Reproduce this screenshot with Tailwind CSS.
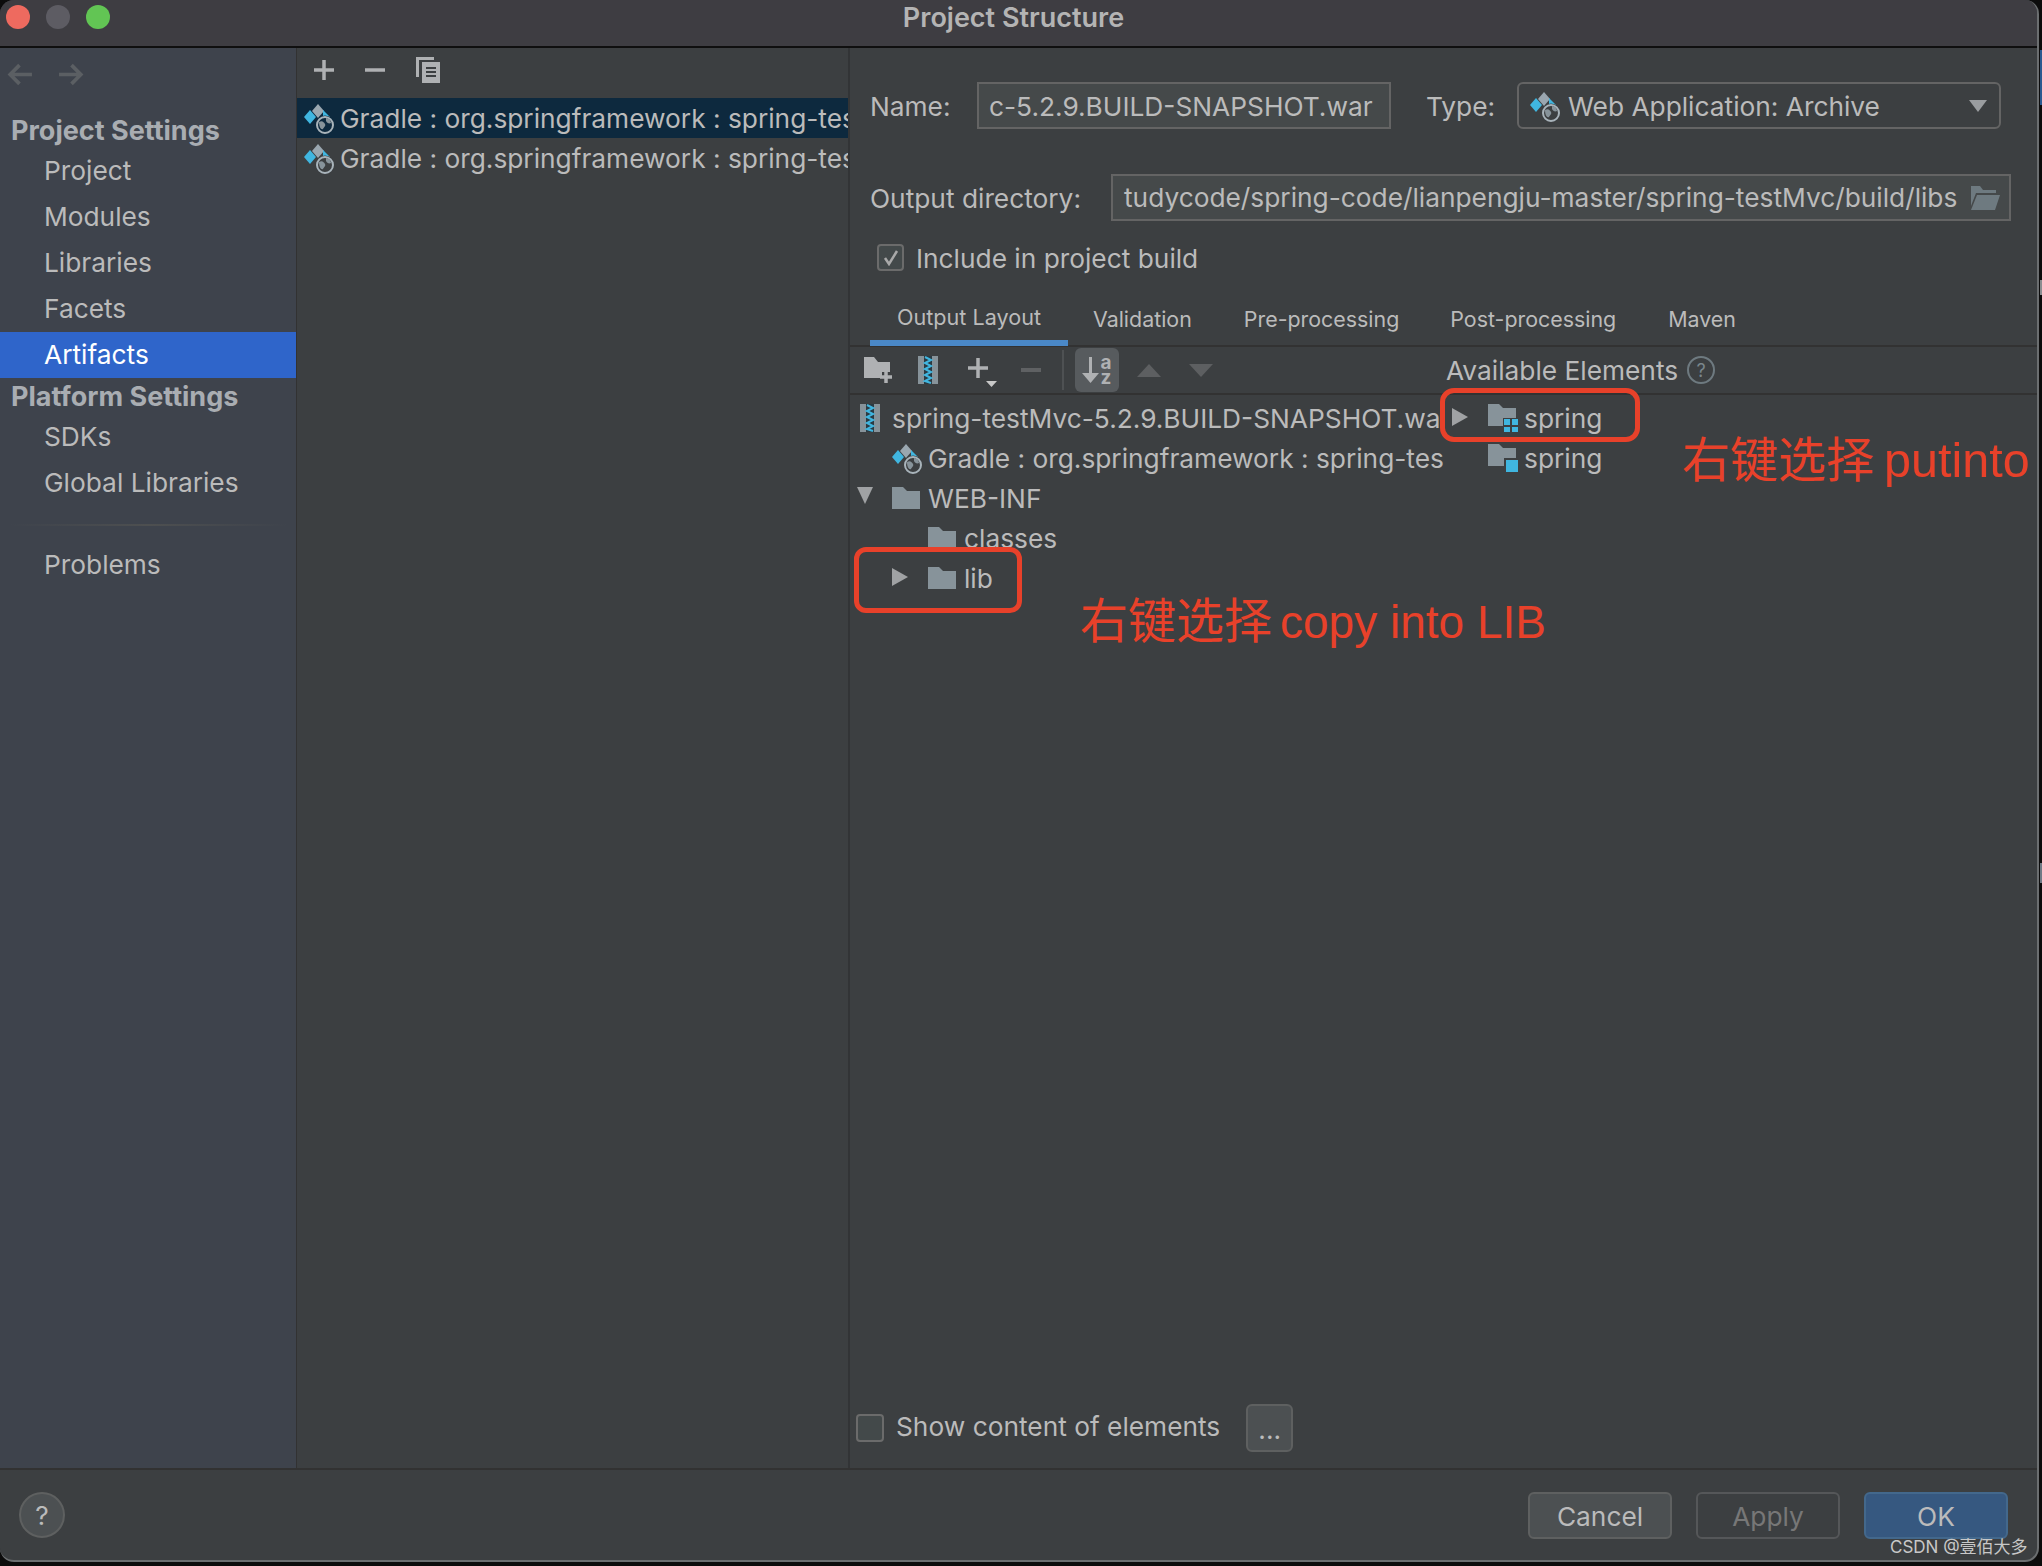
<!DOCTYPE html>
<html lang="zh-CN">
<head>
  <meta charset="UTF-8">
  <title>Project Structure</title>
  <script src="https://cdn.jsdelivr.net/npm/@tailwindcss/browser@4"></script>
</head>
<body class="bg-[#0c0c0c] w-[2042px] h-[1566px] overflow-hidden relative font-['Inter','Noto_Sans_CJK_SC',sans-serif] text-[26.3px] text-[#bbbbbb]">

  <!-- icons used more than once -->
  <svg class="hidden">
    <symbol id="web" viewBox="0 0 30 34">
      <path d="M14 3l6 7-6 7-6-7z" fill="#9aa7b0"/>
      <path d="M6 9l6 7-6 7-6-7z" fill="#40b6e0"/>
      <path d="M19 9l7 7h-7z" fill="#40b6e0"/>
      <circle cx="21" cy="24" r="9.500" fill="currentColor"/>
      <circle cx="21" cy="24" r="8" fill="none" stroke="#a8b3ba" stroke-width="2"/>
      <path d="M15 21c3-2 5 0 6 2s-1 3-2 5c-2 1-4-2-4-7zm7-4c3 0 5 3 5 5-2 1-4 0-5-2z" fill="#87939a"/>
    </symbol>
    <symbol id="folder" viewBox="0 0 28 22">
      <path d="M0 0h11l4 4h13v18H0z" fill="#87939a"/>
    </symbol>
    <symbol id="zip" viewBox="0 0 20 28">
      <rect width="20" height="28" fill="#87939a"/>
      <rect x="6" width="8" height="28" fill="#2b3a42"/>
      <path d="M7 1l6 3-6 3 6 3-6 3 6 3-6 3 6 3-6 3 6 2" fill="none" stroke="#40b6e0" stroke-width="2"/>
    </symbol>
  </svg>

  <!-- window -->
  <div class="w-[2039px] h-[1562px] flex flex-col bg-[#3c3f41] border-r-2 border-b-2 border-[#6b6e70] rounded-t-[14px] rounded-b-[14px] overflow-hidden">

    <!-- title bar -->
    <div class="h-[48px] shrink-0 bg-[#3e3d42] border-b-2 border-[#0f0f0f] flex items-center relative pb-[12px]">
      <div class="flex gap-[16px] pl-[6px]">
        <span class="w-[24px] h-[24px] rounded-full bg-[#ee6a5f]"></span>
        <span class="w-[24px] h-[24px] rounded-full bg-[#5d5c63]"></span>
        <span class="w-[24px] h-[24px] rounded-full bg-[#62c554]"></span>
      </div>
      <div class="flex-1 text-center font-semibold text-[#b4b4b4] text-[27px] pr-[120px] pt-[2px]">Project Structure</div>
    </div>

    <!-- body -->
    <div class="flex-1 flex min-h-0">

      <!-- sidebar -->
      <div class="w-[297px] shrink-0 bg-[#3e434c] border-r border-[#323232] flex flex-col">
        <div class="h-[62px] flex items-start pt-[14px] pl-[6px] gap-[25px]">
          <svg class="w-[27px] h-[25px]" viewBox="0 0 26 24"><path d="M25 12H4M13 3l-9 9 9 9" fill="none" stroke="#5b5f63" stroke-width="3.5"/></svg>
          <svg class="w-[27px] h-[25px]" viewBox="0 0 26 24"><path d="M1 12h21M13 3l9 9-9 9" fill="none" stroke="#5b5f63" stroke-width="3.5"/></svg>
        </div>
        <div class="h-[38px] pl-[11px] pt-[4px] flex items-center font-bold text-[27px] text-[#a9adb2]">Project Settings</div>
        <div class="h-[46px] pl-[44px] flex items-center">Project</div>
        <div class="h-[46px] pl-[44px] flex items-center">Modules</div>
        <div class="h-[46px] pl-[44px] flex items-center">Libraries</div>
        <div class="h-[46px] pl-[44px] flex items-center">Facets</div>
        <div class="h-[46px] pl-[44px] flex items-center bg-[#2f65ca] text-white">Artifacts</div>
        <div class="h-[36px] pl-[11px] pt-[2px] flex items-center font-bold text-[27px] text-[#a9adb2]">Platform Settings</div>
        <div class="h-[46px] pl-[44px] flex items-center">SDKs</div>
        <div class="h-[46px] pl-[44px] flex items-center">Global Libraries</div>
        <div class="h-[2px] mt-[18px] mb-[16px] mx-[8px] bg-gradient-to-r from-[#3e434c] via-[#4d4f50] to-[#3e434c]"></div>
        <div class="h-[46px] pl-[44px] flex items-center">Problems</div>
      </div>

      <!-- artifact list -->
      <div class="w-[553px] shrink-0 border-r-2 border-[#323436] flex flex-col">
        <div class="h-[44px] shrink-0 border-b-2 border-[#323232] flex items-center pl-[17px] pb-[6px] gap-[31px] box-content">
          <svg class="w-[20px] h-[20px]" viewBox="0 0 20 20"><path d="M10 0v20M0 10h20" stroke="#afb1b3" stroke-width="3.5"/></svg>
          <svg class="w-[20px] h-[20px]" viewBox="0 0 20 20"><path d="M0 10h20" stroke="#afb1b3" stroke-width="3.5"/></svg>
          <svg class="w-[24px] h-[26px]" viewBox="0 0 24 26"><path d="M0 0h18v3H3v17H0z" fill="#afb1b3"/><path d="M6 5h18v21H6z" fill="#afb1b3"/><path d="M10 11h10M10 15h10M10 19h10" stroke="#3c3f41" stroke-width="2"/></svg>
        </div>
        <div class="h-[40px] -mt-[2px] bg-[#0d293e] flex items-center pl-[7px] gap-[6px] overflow-hidden whitespace-nowrap">
          <svg class="w-[30px] h-[34px] shrink-0 text-[#0d293e]"><use href="#web"/></svg><span class="pt-[2px]">Gradle : org.springframework : spring-test</span>
        </div>
        <div class="h-[40px] flex items-center pl-[7px] gap-[6px] overflow-hidden whitespace-nowrap">
          <svg class="w-[30px] h-[34px] shrink-0 text-[#3c3f41]"><use href="#web"/></svg><span class="pt-[2px]">Gradle : org.springframework : spring-test</span>
        </div>
      </div>

      <!-- artifact details -->
      <div class="flex-1 min-w-0 flex flex-col">
        <div class="pl-[20px] pt-[34px] flex flex-col">
          <div class="flex items-center h-[47px]">
            <span class="w-[107px] pt-[2px]">Name:</span>
            <div class="w-[414px] h-[47px] bg-[#45494a] border-2 border-[#646464] flex items-center pl-[10px] pt-[3px] whitespace-nowrap overflow-hidden">c-5.2.9.BUILD-SNAPSHOT.war</div>
            <span class="ml-[35px] w-[91px] pt-[2px]">Type:</span>
            <div class="w-[484px] h-[47px] border-2 border-[#646464] rounded-[6px] flex items-center pl-[11px] gap-[8px] text-[#bbbbbb]">
              <svg class="w-[30px] h-[34px] shrink-0 text-[#3c3f41]"><use href="#web"/></svg>
              <span class="flex-1 pt-[3px]">Web Application: Archive</span>
              <svg class="w-[18px] h-[12px] mr-[12px]" viewBox="0 0 18 12"><path d="M0 0h18l-9 12z" fill="#9a9da0"/></svg>
            </div>
          </div>
          <div class="flex items-center h-[47px] mt-[45px]">
            <span class="w-[241px] pt-[2px]">Output directory:</span>
            <div class="w-[900px] h-[47px] bg-[#45494a] border-2 border-[#646464] flex items-center pl-[11px] whitespace-nowrap overflow-hidden">
              <span class="flex-1 pt-[1px]">tudycode/spring-code/lianpengju-master/spring-testMvc/build/libs</span>
              <svg class="w-[30px] h-[24px] mr-[9px] shrink-0" viewBox="0 0 30 24"><path d="M1 0h9l3 4h13v3H6L1 20z" fill="#6e7a80"/><path d="M7 9h23l-5 15H1z" fill="#6e7a80"/></svg>
            </div>
          </div>
          <div class="flex items-center h-[27px] mt-[23px] pl-[7px] gap-[12px]">
            <div class="w-[27px] h-[27px] bg-[#43494a] border-2 border-[#6b6b6b] rounded-[4px] flex items-center justify-center">
              <svg class="w-[16px] h-[16px]" viewBox="0 0 16 16"><path d="M2 8l4 6 8-13" fill="none" stroke="#a9a9a9" stroke-width="2.5"/></svg>
            </div>
            <span class="pt-[2px]">Include in project build</span>
          </div>
        </div>

        <!-- tabs -->
        <div class="h-[76px] shrink-0 border-b-2 border-[#323232] pl-[20px] flex items-end text-[21.4px]">
          <div class="w-[198px] h-[53px] flex items-center justify-center border-b-[6px] border-[#4a88c7] -mb-[1px] pt-[2px] text-[21.6px]">Output Layout</div>
          <div class="h-[53px] pl-[25px] flex items-center pt-[1px]">Validation</div>
          <div class="h-[53px] pl-[52px] flex items-center pt-[1px]">Pre-processing</div>
          <div class="h-[53px] pl-[51px] flex items-center pt-[1px]">Post-processing</div>
          <div class="h-[53px] pl-[52px] flex items-center pt-[1px]">Maven</div>
        </div>

        <!-- output layout toolbar -->
        <div class="h-[48px] shrink-0 border-b-2 border-[#323232] flex items-center">
          <div class="w-[594px] flex items-center pl-[14px]">
            <svg class="w-[28px] h-[26px]" viewBox="0 0 28 26"><path d="M0 0h10l4 5h12v10H18v6H0z" fill="#afb1b3"/><path d="M22 14v12M16 20h12" stroke="#afb1b3" stroke-width="3.5"/></svg>
            <svg class="w-[20px] h-[28px] ml-[26px]"><use href="#zip"/></svg>
            <svg class="w-[30px] h-[30px] ml-[30px] mt-[5px]" viewBox="0 0 30 30"><path d="M10 0v20M0 10h20" stroke="#afb1b3" stroke-width="3.5"/><path d="M18 23h11l-5.500 6z" fill="#c8c8c8"/></svg>
            <svg class="w-[20px] h-[4px] ml-[23px]"><rect width="20" height="4" fill="#5f6163"/></svg>
            <div class="w-[2px] h-[40px] bg-[#4e5153] ml-[21px]"></div>
            <div class="w-[44px] h-[44px] ml-[11px] bg-[#575b5e] rounded-[6px] flex items-center justify-center gap-[1px]">
              <svg class="w-[17px] h-[26px]" viewBox="0 0 17 26"><path d="M8.500 0v22" stroke="#afb1b3" stroke-width="3"/><path d="M0 16h17l-8.500 10z" fill="#afb1b3"/></svg>
              <div class="flex flex-col text-[19px] leading-[15px] font-bold text-[#afb1b3]"><span>a</span><span>z</span></div>
            </div>
            <svg class="w-[24px] h-[13px] ml-[18px]" viewBox="0 0 24 13"><path d="M12 0l12 13H0z" fill="#5d5f61"/></svg>
            <svg class="w-[24px] h-[13px] ml-[28px]" viewBox="0 0 24 13"><path d="M0 0h24L12 13z" fill="#5d5f61"/></svg>
          </div>
          <div class="flex items-center pl-[2px] gap-[9px]">
            <span class="pt-[2px]">Available Elements</span>
            <div class="w-[28px] h-[28px] rounded-full border-2 border-[#6e7a80] flex items-center justify-center text-[18px] text-[#7a868c]">?</div>
          </div>
        </div>

        <!-- trees -->
        <div class="flex-1 flex min-h-0 pt-[3px]">
          <div class="w-[594px] whitespace-nowrap overflow-hidden">
            <div class="h-[40px] flex items-center pl-[10px] gap-[12px]">
              <svg class="w-[20px] h-[28px] shrink-0"><use href="#zip"/></svg><span class="pt-[2px]">spring-testMvc-5.2.9.BUILD-SNAPSHOT.war</span>
            </div>
            <div class="h-[40px] flex items-center pl-[42px] gap-[6px]">
              <svg class="w-[30px] h-[34px] shrink-0 text-[#3c3f41]"><use href="#web"/></svg><span class="pt-[2px]">Gradle : org.springframework : spring-tes</span>
            </div>
            <div class="h-[40px] flex items-center pl-[7px]">
              <svg class="w-[16px] h-[17px] -mt-[6px]" viewBox="0 0 16 17"><path d="M0 0h16L8 17z" fill="#a0a2a4"/></svg>
              <svg class="w-[28px] h-[22px] ml-[19px]"><use href="#folder"/></svg><span class="ml-[8px] pt-[2px]">WEB-INF</span>
            </div>
            <div class="h-[40px] flex items-center pl-[78px]">
              <svg class="w-[28px] h-[22px]"><use href="#folder"/></svg><span class="ml-[8px] pt-[2px]">classes</span>
            </div>
            <div class="h-[40px] flex items-center pl-[42px]">
              <svg class="w-[16px] h-[18px] -mt-[2px]" viewBox="0 0 16 18"><path d="M0 0l16 9L0 18z" fill="#a0a2a4"/></svg>
              <svg class="w-[28px] h-[22px] ml-[20px]"><use href="#folder"/></svg><span class="ml-[8px] pt-[2px]">lib</span>
            </div>
          </div>
          <div class="flex-1">
            <div class="h-[40px] flex items-center pl-[8px]">
              <svg class="w-[16px] h-[18px] -mt-[2px]" viewBox="0 0 16 18"><path d="M0 0l16 9L0 18z" fill="#a0a2a4"/></svg>
              <svg class="w-[30px] h-[28px] ml-[20px]" viewBox="0 0 30 28"><path d="M0 0h11l4 4h13v18H0z" fill="#87939a"/><rect x="15" y="14" width="15" height="14" fill="#3c3f41"/><path d="M16 15h6v6h-6zM24 15h6v6h-6zM16 23h6v5h-6zM24 23h6v5h-6z" fill="#40b6e0"/></svg>
              <span class="ml-[6px] pt-[2px]">spring</span>
            </div>
            <div class="h-[40px] flex items-center pl-[44px]">
              <svg class="w-[30px] h-[28px]" viewBox="0 0 30 28"><path d="M0 0h11l4 4h13v18H0z" fill="#87939a"/><rect x="16" y="14" width="14" height="14" fill="#3c3f41"/><rect x="18" y="16" width="12" height="12" fill="#40b6e0"/></svg>
              <span class="ml-[6px] pt-[2px]">spring</span>
            </div>
          </div>
        </div>

        <!-- show content -->
        <div class="h-[48px] shrink-0 mb-[16px] flex items-center pl-[6px]">
          <div class="w-[28px] h-[28px] bg-[#43494a] border-2 border-[#6b6b6b] rounded-[4px]"></div>
          <span class="ml-[12px] pb-[2px]">Show content of elements</span>
          <div class="w-[47px] h-[48px] ml-[26px] bg-[#4c5052] border-2 border-[#5e6060] rounded-[6px] flex items-center justify-center pt-[4px]">...</div>
        </div>
      </div>
    </div>

    <!-- footer -->
    <div class="h-[92px] shrink-0 border-t-2 border-[#323232] flex items-center pl-[19px] pr-[29px]">
      <div class="w-[46px] h-[46px] rounded-full bg-[#4c5052] border-2 border-[#5e6060] flex items-center justify-center pt-[1px]">?</div>
      <div class="flex-1"></div>
      <div class="w-[144px] h-[47px] bg-[#4c5052] border-2 border-[#5e6060] rounded-[6px] flex items-center justify-center pt-[3px]">Cancel</div>
      <div class="w-[144px] h-[47px] ml-[24px] bg-[#3c3f41] border-2 border-[#555759] rounded-[6px] text-[#777777] flex items-center justify-center pt-[3px]">Apply</div>
      <div class="w-[144px] h-[47px] ml-[24px] bg-[#365880] border-2 border-[#43688c] rounded-[6px] flex items-center justify-center pt-[3px]">OK</div>
    </div>
  </div>

  <!-- annotations drawn over the screenshot -->
  <div class="absolute left-[1440px] top-[388px] w-[200px] h-[54px] border-[5px] border-[#e8412a] rounded-[14px]"></div>
  <div class="absolute left-[854px] top-[547px] w-[168px] h-[66px] border-[5px] border-[#e8412a] rounded-[12px]"></div>
  <div class="absolute left-[1682px] top-[426px] flex items-baseline gap-[10px] leading-[60px] text-[#e8412a] whitespace-nowrap">
    <span class="text-[48px] font-['Noto_Sans_CJK_SC',sans-serif]">右键选择</span>
    <span class="text-[48.500px] font-['Liberation_Sans',sans-serif]">putinto</span>
  </div>
  <div class="absolute left-[1080px] top-[587px] flex items-baseline gap-[8px] leading-[60px] text-[#e8412a] whitespace-nowrap">
    <span class="text-[48px] font-['Noto_Sans_CJK_SC',sans-serif]">右键选择</span>
    <span class="text-[46px] font-['Liberation_Sans',sans-serif]">copy into LIB</span>
  </div>
  <div class="absolute left-[1890px] top-[1535px] text-[17px] leading-[24px] text-[#c8c8c8] whitespace-nowrap">CSDN @壹佰大多</div>

  <!-- bits of the window behind -->
  <div class="absolute left-[2040px] top-[50px] w-[2px] h-[55px] bg-[#2a5a90]"></div>
  <div class="absolute left-[2040px] top-[280px] w-[2px] h-[15px] bg-[#8a8d90]"></div>
  <div class="absolute left-[2040px] top-[863px] w-[2px] h-[20px] bg-[#6f7a85]"></div>
</body>
</html>
